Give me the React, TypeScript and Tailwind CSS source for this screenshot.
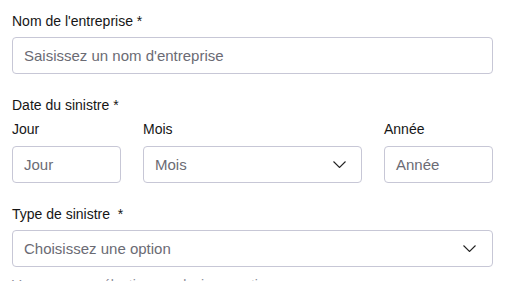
import React from "react";

const Chevron = () => (
  <svg width="13" height="7" viewBox="0 0 13 7" fill="none" className="shrink-0">
    <path d="M0.5 0.5L6.5 6.5L12.5 0.5" stroke="#222" strokeWidth="1.1" />
  </svg>
);

export default function App() {
  const font = { fontFamily: '"Liberation Sans", Arial, sans-serif' };
  return (
    <div className="w-[513px] h-[281px] overflow-hidden bg-white pl-3 pr-[20px] pt-[12px]" style={font}>
      <div className="text-[14px] leading-[18px] text-[#161616]">Nom de l'entreprise *</div>
      <div className="mt-[7px] h-[37px] rounded-[4px] border border-[#c7c7d6] flex items-center px-[11px] pt-[2px] text-[15px] text-[#6b6b74]">
        Saisissez un nom d'entreprise
      </div>

      <div className="mt-[22px] text-[14px] leading-[18px] text-[#161616]">Date du sinistre *</div>
      <div className="mt-[6px] flex gap-[22px]">
        <div className="w-[109px] flex flex-col">
          <div className="text-[14px] leading-[18px] text-[#161616]">Jour</div>
          <div className="mt-[8px] h-[37px] rounded-[4px] border border-[#c7c7d6] flex items-center px-[11px] pt-[1px] text-[15px] text-[#6b6b74]">Jour</div>
        </div>
        <div className="flex-1 flex flex-col">
          <div className="text-[14px] leading-[18px] text-[#161616]">Mois</div>
          <div className="mt-[8px] h-[37px] rounded-[4px] border border-[#c7c7d6] flex items-center justify-between pl-[11px] pr-[15px] text-[15px] text-[#6b6b74]">
            <span className="pt-[2px]">Mois</span>
            <Chevron />
          </div>
        </div>
        <div className="w-[109px] flex flex-col">
          <div className="text-[14px] leading-[18px] text-[#161616]">Année</div>
          <div className="mt-[8px] h-[37px] rounded-[4px] border border-[#c7c7d6] flex items-center px-[11px] pt-[1px] text-[15px] text-[#6b6b74]">Année</div>
        </div>
      </div>

      <div className="mt-[22px] text-[14px] leading-[18px] text-[#161616]">Type de sinistre&nbsp; *</div>
      <div className="mt-[7px] h-[37px] rounded-[4px] border border-[#c7c7d6] flex items-center justify-between pl-[11px] pr-[16px] text-[15px] text-[#6b6b74]">
        <span className="pt-[1px]">Choisissez une option</span>
        <Chevron />
      </div>
      <div className="mt-[9px] text-[14px] leading-[18px] text-[#8a8a96]">Vous pouvez sélectionner plusieurs options</div>
    </div>
  );
}
